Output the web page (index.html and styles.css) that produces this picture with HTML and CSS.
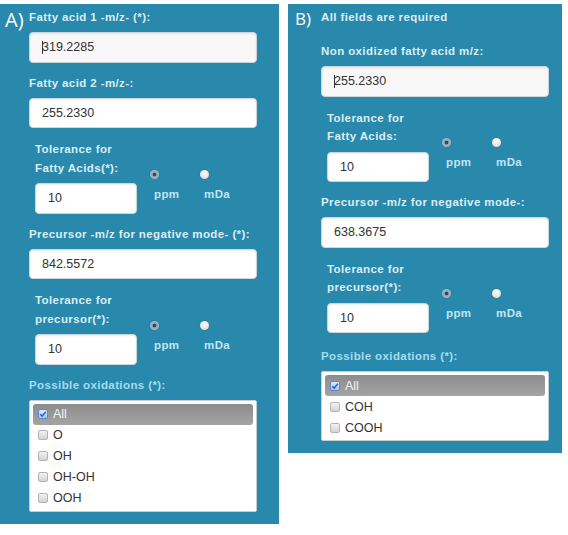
FILE: index.html
```html
<!DOCTYPE html>
<html>
<head>
<meta charset="utf-8">
<title>Oxidized lipid search forms</title>
<link rel="stylesheet" href="styles.css">
</head>
<body>
<div class="figure">
  <section class="panel panel-a">
    <span class="tag tag-a">A)</span>
    <div class="field">
      <div class="label">Fatty acid 1 -m/z- (*):</div>
      <div class="input focus"><span class="caret"></span>319.2285</div>
    </div>
    <div class="field">
      <div class="label">Fatty acid 2 -m/z-:</div>
      <div class="input">255.2330</div>
    </div>
    <div class="field tol">
      <div class="tol-main">
        <div class="label two">Tolerance for<br>Fatty Acids(*):</div>
        <div class="input small">10</div>
      </div>
      <div class="opt"><span class="radio on"></span><span class="opt-lbl">ppm</span></div>
      <div class="opt"><span class="radio"></span><span class="opt-lbl">mDa</span></div>
    </div>
    <div class="field">
      <div class="label">Precursor -m/z for negative mode- (*):</div>
      <div class="input">842.5572</div>
    </div>
    <div class="field tol">
      <div class="tol-main">
        <div class="label two">Tolerance for<br>precursor(*):</div>
        <div class="input small">10</div>
      </div>
      <div class="opt"><span class="radio on"></span><span class="opt-lbl">ppm</span></div>
      <div class="opt"><span class="radio"></span><span class="opt-lbl">mDa</span></div>
    </div>
    <div class="field ox">
      <div class="label cyan">Possible oxidations (*):</div>
      <ul class="list">
        <li class="row sel"><span class="cb on"><svg viewBox="0 0 10 10" width="8" height="8"><path d="M1.5 5.2 L4 7.6 L8.6 2" fill="none" stroke="#2c5fc4" stroke-width="1.8"/></svg></span>All</li>
        <li class="row"><span class="cb"></span>O</li>
        <li class="row"><span class="cb"></span>OH</li>
        <li class="row"><span class="cb"></span>OH-OH</li>
        <li class="row"><span class="cb"></span>OOH</li>
      </ul>
    </div>
  </section>

  <section class="panel panel-b">
    <span class="tag tag-b">B)</span>
    <p class="label note">All fields are required</p>
    <div class="field">
      <div class="label">Non oxidized fatty acid m/z:</div>
      <div class="input focus"><span class="caret"></span>255.2330</div>
    </div>
    <div class="field tol">
      <div class="tol-main">
        <div class="label two">Tolerance for<br>Fatty Acids:</div>
        <div class="input small">10</div>
      </div>
      <div class="opt"><span class="radio on"></span><span class="opt-lbl">ppm</span></div>
      <div class="opt"><span class="radio"></span><span class="opt-lbl">mDa</span></div>
    </div>
    <div class="field">
      <div class="label">Precursor -m/z for negative mode-:</div>
      <div class="input">638.3675</div>
    </div>
    <div class="field tol">
      <div class="tol-main">
        <div class="label two">Tolerance for<br>precursor(*):</div>
        <div class="input small">10</div>
      </div>
      <div class="opt"><span class="radio on"></span><span class="opt-lbl">ppm</span></div>
      <div class="opt"><span class="radio"></span><span class="opt-lbl">mDa</span></div>
    </div>
    <div class="field ox">
      <div class="label cyan">Possible oxidations (*):</div>
      <ul class="list">
        <li class="row sel"><span class="cb on"><svg viewBox="0 0 10 10" width="8" height="8"><path d="M1.5 5.2 L4 7.6 L8.6 2" fill="none" stroke="#2c5fc4" stroke-width="1.8"/></svg></span>All</li>
        <li class="row"><span class="cb"></span>COH</li>
        <li class="row"><span class="cb"></span>COOH</li>
      </ul>
    </div>
  </section>
</div>
</body>
</html>
```

FILE: styles.css
```css
* {
  box-sizing: border-box;
  margin: 0;
  padding: 0;
}

body {
  background: #ffffff;
  font-family: "Liberation Sans", Arial, sans-serif;
}

.figure {
  display: flex;
  align-items: flex-start;
  gap: 9px;
  padding-top: 4px;
}

.panel {
  position: relative;
  background: #2889ac;
  padding-top: 5px;
  padding-bottom: 12px;
}

.panel-a {
  width: 279px;
  padding-left: 29px;
  --last: 12px;
}

.panel-b {
  width: 274px;
  padding-left: 33px;
  --last: 15px;
}

.tag {
  position: absolute;
  color: #ffffff;
  font-family: "Open Sans", sans-serif;
  font-weight: 400;
  line-height: 1;
}

.tag-a {
  left: 5px;
  top: 5.5px;
  font-size: 20px;
}

.tag-b {
  left: 7px;
  top: 5.7px;
  font-size: 17px;
}

.label {
  font-size: 11.5px;
  font-weight: bold;
  letter-spacing: 0.4px;
  line-height: 16px;
  color: #dcedf4;
  margin-bottom: 7px;
}

.label.cyan {
  color: #a6dcf0;
}

.note {
  margin-bottom: 18px;
}

.label.two {
  line-height: 18.5px;
  margin-bottom: 6px;
}

.field + .field {
  margin-top: 12px;
}

.field + .ox {
  margin-top: var(--last);
}

.input {
  width: 228px;
  height: 30.5px;
  display: flex;
  align-items: center;
  padding-left: 12px;
  background: #ffffff;
  border: 1px solid #cdd6da;
  border-radius: 4px;
  box-shadow: inset 0 1px 2px rgba(0, 0, 0, 0.08);
  font-size: 12.5px;
  color: #333333;
}

.input.focus {
  background: #f8f8f8;
}

.input.small {
  width: 102px;
}

.caret {
  display: inline-block;
  width: 1px;
  height: 13px;
  background: #333333;
  margin-right: -1px;
}

.tol {
  display: flex;
  align-items: flex-end;
  padding-left: 6px;
}

.tol-main {
  width: 102px;
}

.opt {
  width: 50px;
  display: flex;
  flex-direction: column;
  align-items: flex-start;
  margin-bottom: 12px;
}

.tol-main + .opt {
  margin-left: 17px;
}

.radio {
  width: 9px;
  height: 9px;
  border-radius: 50%;
  margin-left: -4.5px;
  margin-bottom: 7px;
  background: radial-gradient(circle at 50% 35%, #fdfafa 0%, #ebe5e4 60%, #cdc8c8 100%);
  box-shadow: 0 0 0 0.5px rgba(80, 80, 80, 0.3);
}

.radio.on {
  background: radial-gradient(circle, #34495c 0 1.6px, #8fa5b8 2.2px, #b9c8d5 100%);
}

.opt-lbl {
  font-size: 11.5px;
  font-weight: bold;
  letter-spacing: 0.4px;
  line-height: 16px;
  color: #c3e5f3;
}

.list {
  list-style: none;
  width: 228px;
  background: #ffffff;
  border: 1px solid #c6cfd3;
  border-radius: 2px;
  padding: 3px 3px 2px;
}

.row {
  height: 21px;
  display: flex;
  align-items: center;
  gap: 5px;
  padding-left: 5px;
  font-size: 12.5px;
  color: #333333;
}

.row.sel {
  background: linear-gradient(#8c8c8c, #a4a4a4);
  border-radius: 3px;
  color: #f4f4f4;
}

.cb {
  width: 10px;
  height: 10px;
  flex: none;
  display: flex;
  align-items: center;
  justify-content: center;
  border: 1px solid #b3b3b3;
  border-radius: 2px;
  background: linear-gradient(#f3f3f3, #d3d3d3);
}

.cb.on {
  border-color: #5b8bd4;
  background: linear-gradient(#dbe8fc, #a8c5f2);
}
```
